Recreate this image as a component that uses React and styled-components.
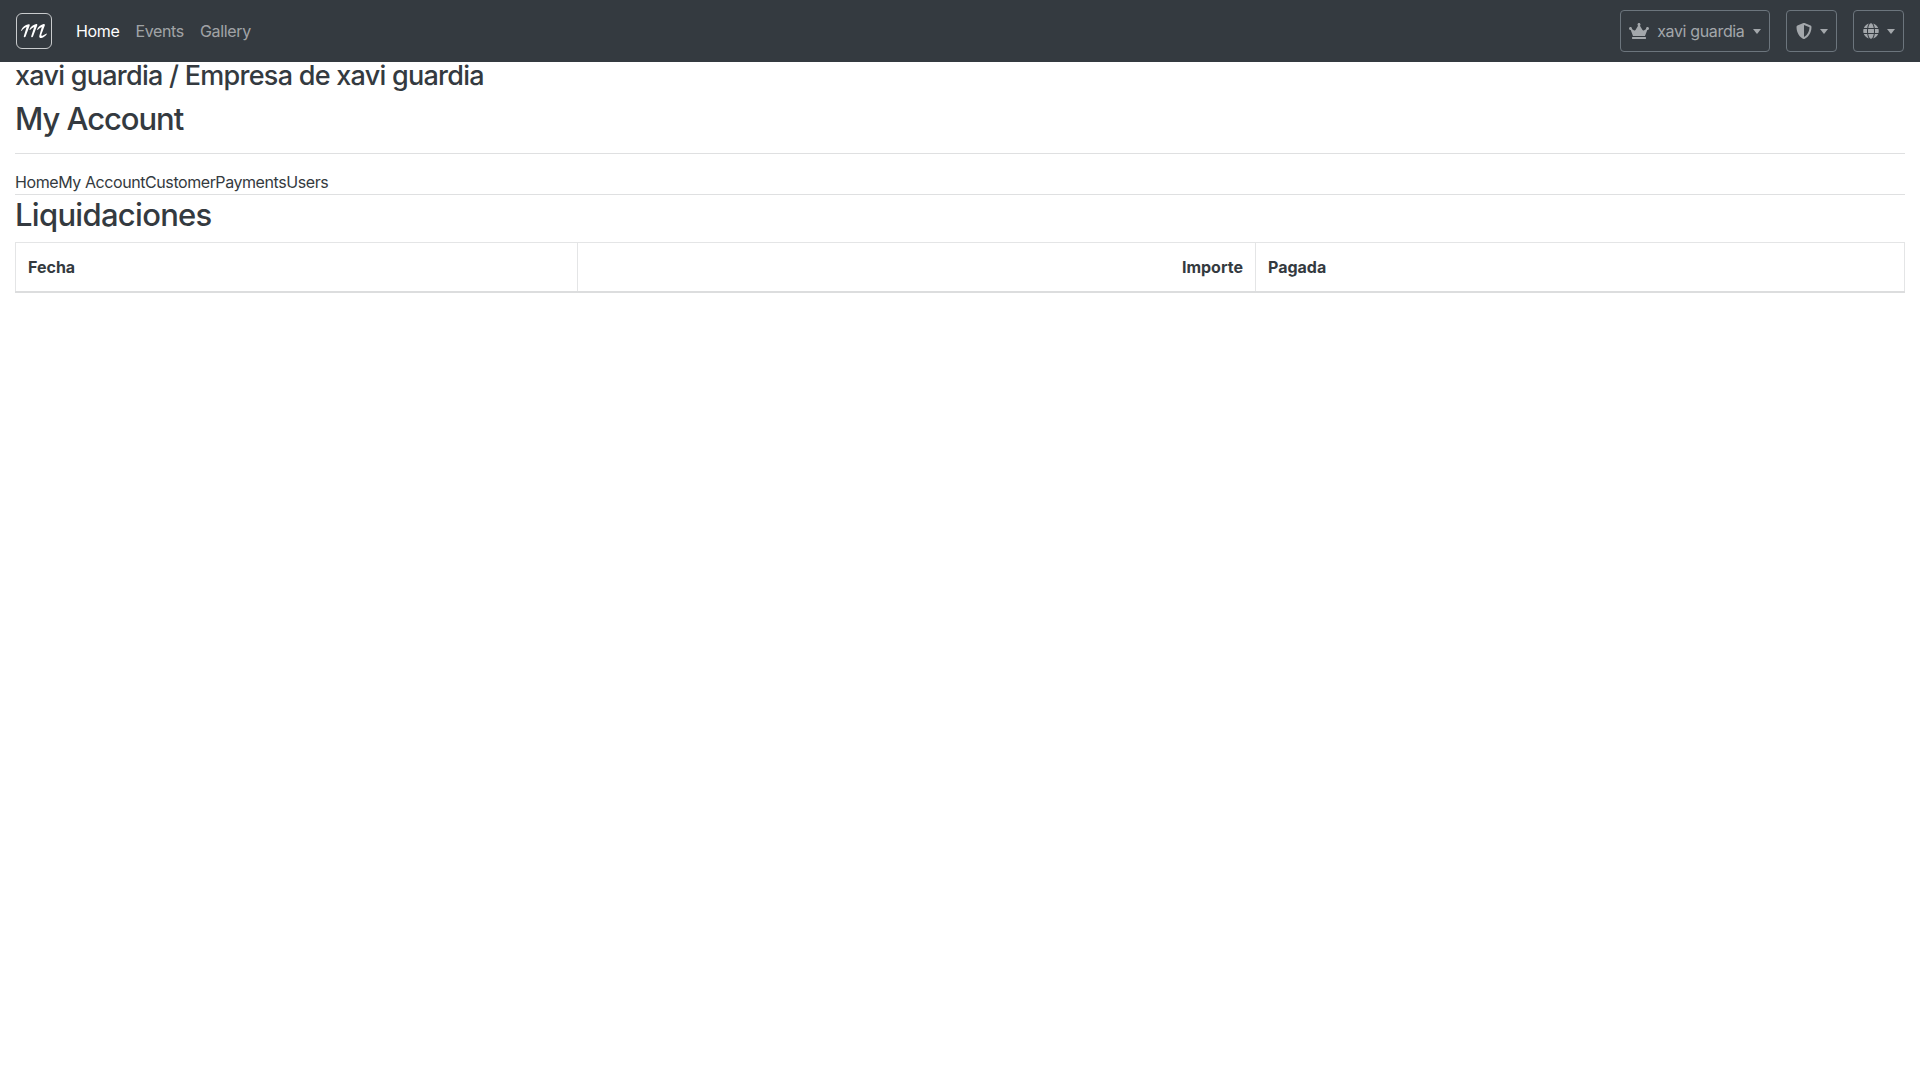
import React from "react"
import styled, { createGlobalStyle } from "styled-components"
import { FaCrown, FaShieldAlt, FaGlobe } from "react-icons/fa"

const GlobalStyle = createGlobalStyle`
  html, body {
    margin: 0;
    background: #fff;
    color: #343a40;
    font-family: Inter, "Liberation Sans", sans-serif;
    font-size: 16px;
    line-height: 1.5;
  }
  * {
    box-sizing: border-box;
  }
`

const Navbar = styled.nav`
  height: 62px;
  background: #343a40;
  display: flex;
  align-items: center;
  justify-content: space-between;
  padding: 0 16px;
`

const NavLeft = styled.div`
  display: flex;
  align-items: center;
`

const NavRight = styled.div`
  display: flex;
  align-items: center;
  gap: 16px;
`

const Brand = styled.a`
  width: 36px;
  height: 36px;
  border: 1px solid #c9cbcd;
  border-radius: 6px;
  display: flex;
  align-items: center;
  justify-content: center;
  margin-right: 24px;
`

const NavLinks = styled.div`
  display: flex;
  gap: 16px;
`

const NavLink = styled.a`
  color: ${props => (props.$active ? "#fff" : "rgba(255, 255, 255, 0.55)")};
  font-size: 16px;
  letter-spacing: -0.35px;
`

const DropdownButton = styled.button`
  height: 42px;
  display: flex;
  align-items: center;
  background: transparent;
  border: 1px solid #6c757d;
  border-radius: 4px;
  color: #a3a7ab;
  font-family: inherit;
  font-size: 16px;
  letter-spacing: -0.35px;
  padding: 0 8.5px;
  gap: 8px;
`

const Caret = styled.span`
  width: 0;
  height: 0;
  border-top: 5px solid #a3a7ab;
  border-left: 4.5px solid transparent;
  border-right: 4.5px solid transparent;
`

const Page = styled.main`
  padding: 0 15px;
`

const Company = styled.h3`
  margin: 0;
  font-size: 27px;
  font-weight: 500;
  line-height: 27px;
  letter-spacing: -0.74px;
`

const PageTitle = styled.h2`
  margin: 11px 0 0;
  font-size: 31px;
  font-weight: 500;
  line-height: 38px;
  letter-spacing: -1.05px;
`

const Rule = styled.hr`
  margin: ${props => props.$margin};
  border: 0;
  border-top: 1px solid #dfe0e1;
`

const Tabs = styled.div`
  display: flex;
  height: 24px;
  line-height: 24px;
`

const Tab = styled.a`
  color: #343a40;
  font-size: 16px;
  letter-spacing: -0.42px;
`

const SectionTitle = styled.h2`
  margin: 1px 0 8px;
  font-size: 31px;
  font-weight: 500;
  line-height: 38px;
  letter-spacing: -0.7px;
`

const Table = styled.table`
  width: 100%;
  border-collapse: collapse;
  table-layout: fixed;
`

const HeaderCell = styled.th`
  height: 49px;
  padding: 8px 12px;
  border: 1px solid #e4e5e6;
  border-bottom: 2px solid #dcddde;
  font-size: 16px;
  font-weight: 700;
  text-align: ${props => props.$align || "left"};
`

const Logo = () => (
  <svg width="28" height="16" viewBox="0 0 28 16" fill="#fff">
    <path d="M1 7.5C2.5 3.8 5 1.6 8.6 1.2C9.6 1.1 10 1.8 9.6 2.7L5.6 13.6C5.2 14.6 3.6 14.4 3.8 13.2L6.6 4C4.8 4.6 3 6 1.6 8Z" />
    <path d="M9.4 6.4C11 3.6 13.4 1.6 16.2 1.1C17.2 1 17.6 1.7 17.2 2.6L13 13.6C12.6 14.6 11 14.4 11.2 13.2L14.2 4C12.6 4.6 11.2 5.6 10 7Z" />
    <path d="M17 6.4C18.6 3.6 21 1.6 23.6 1.1C24.8 .9 25.2 1.7 24.8 2.6L21.4 11.4C21 12.6 21.8 13.2 23 12.6L26.6 10.4L26.9 10.9C25.4 12.8 23.6 14.6 21.4 15C19.6 15.2 18.8 14 19.4 12.4L21.8 4C20.2 4.6 18.8 5.6 17.6 7Z" />
  </svg>
)

const App = () => (
  <>
    <GlobalStyle />
    <Navbar>
      <NavLeft>
        <Brand>
          <Logo />
        </Brand>
        <NavLinks>
          <NavLink $active>Home</NavLink>
          <NavLink>Events</NavLink>
          <NavLink>Gallery</NavLink>
        </NavLinks>
      </NavLeft>
      <NavRight>
        <DropdownButton>
          <FaCrown size={20} />
          xavi guardia
          <Caret />
        </DropdownButton>
        <DropdownButton>
          <FaShieldAlt size={16} />
          <Caret />
        </DropdownButton>
        <DropdownButton>
          <FaGlobe size={16} />
          <Caret />
        </DropdownButton>
      </NavRight>
    </Navbar>
    <Page>
      <Company>xavi guardia / Empresa de xavi guardia</Company>
      <PageTitle>My Account</PageTitle>
      <Rule $margin="15px 0 16px" />
      <Tabs>
        <Tab>Home</Tab>
        <Tab>My Account</Tab>
        <Tab>Customer</Tab>
        <Tab>Payments</Tab>
        <Tab>Users</Tab>
      </Tabs>
      <Rule $margin="0" />
      <SectionTitle>Liquidaciones</SectionTitle>
      <Table>
        <colgroup>
          <col style={{ width: "562px" }} />
          <col style={{ width: "678px" }} />
          <col />
        </colgroup>
        <thead>
          <tr>
            <HeaderCell>Fecha</HeaderCell>
            <HeaderCell $align="right">Importe</HeaderCell>
            <HeaderCell>Pagada</HeaderCell>
          </tr>
        </thead>
      </Table>
    </Page>
  </>
)

export default App
